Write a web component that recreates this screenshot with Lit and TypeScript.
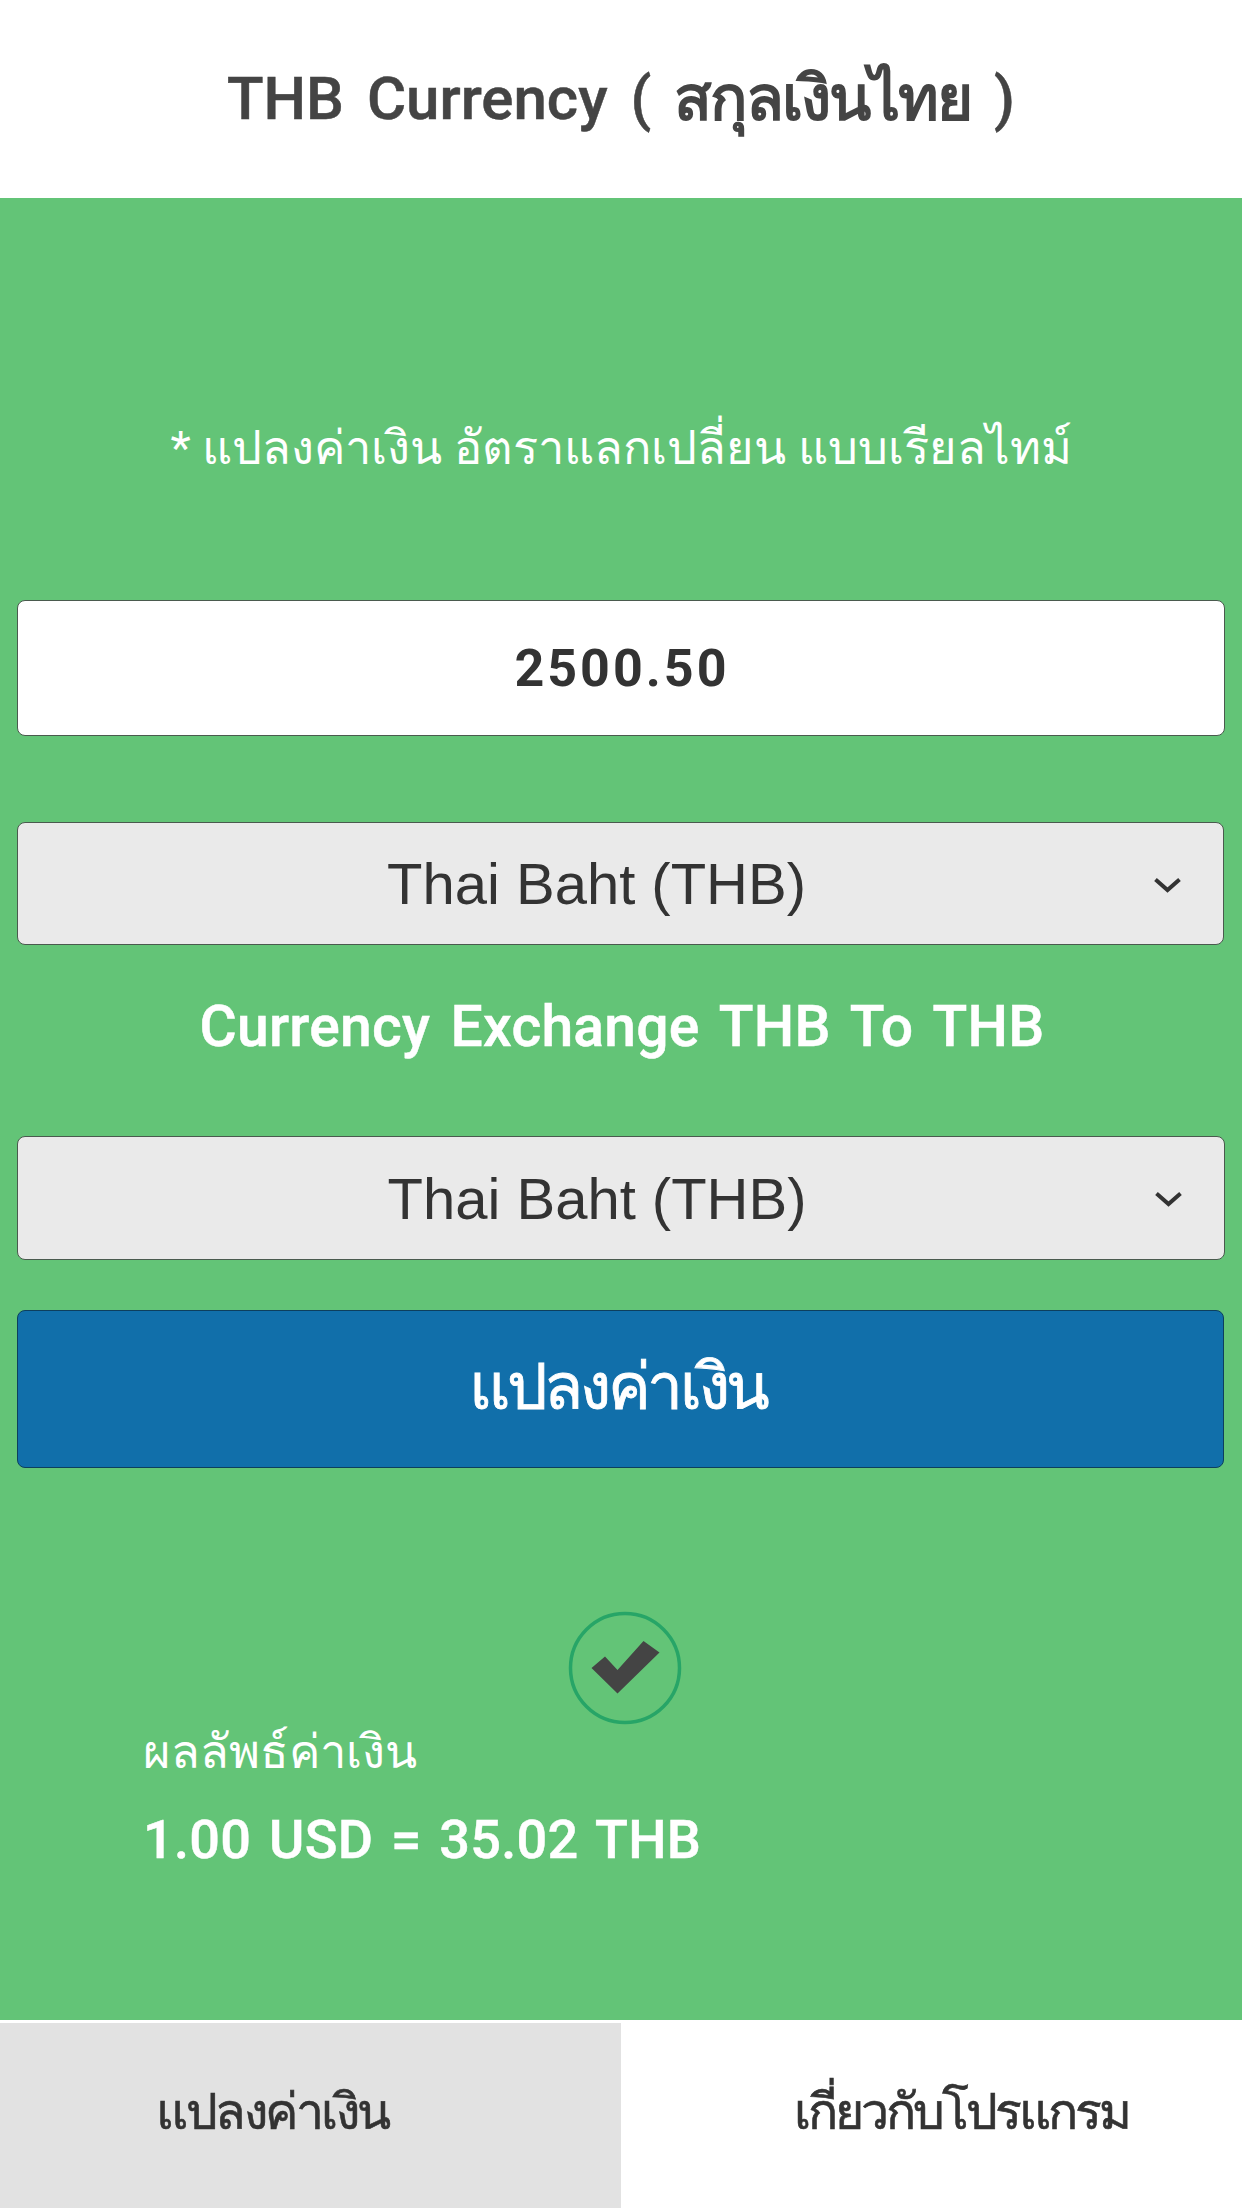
import { LitElement, html, css } from "lit";
import { customElement } from "lit/decorators.js";

const chevron = html`<svg class="chev" width="30" height="20" viewBox="0 0 30 20" aria-hidden="true"><path d="M2.5 4.5 L14.5 15 L26.5 4.5" fill="none" stroke="#333" stroke-width="4"/></svg>`;

@customElement("app-root")
export class AppRoot extends LitElement {
  static styles = css`
    :host { display: block; width: 1242px; height: 2208px; font-family: "Roboto", "Noto Sans", "Noto Sans CJK SC", sans-serif; overflow: hidden; background: #fff; }
    * { box-sizing: border-box; }
    .page { display: flex; flex-direction: column; height: 2208px; }
    .head { height: 198px; display: flex; align-items: center; justify-content: center; background: #fff; color: #444; font-size: 60px; font-weight: 500; letter-spacing: 0; word-spacing: 8px; white-space: pre; -webkit-text-stroke: 0.5px #444; padding-bottom: 2px; }
    .head .th { font-size: 62px; font-weight: 600; letter-spacing: -2px; -webkit-text-stroke: 0; }
    .main { height: 1822px; background: #63c477; padding: 0 17px; display: flex; flex-direction: column; }
    .note { margin-top: 214px; height: 70px; display: flex; align-items: center; justify-content: center; color: #fff; font-size: 47px; white-space: nowrap; }
    .input { margin-top: 118px; height: 136px; background: #fff; border: 1.5px solid #4a5a4e; border-radius: 8px; display: flex; align-items: center; justify-content: center; color: #333; font-size: 52px; font-weight: 700; letter-spacing: 3px; padding-left: 2px; }
    .select { height: 124px; background: #eaeaea; border: 1.5px solid #4a5a4e; border-radius: 8px; position: relative; display: flex; align-items: center; justify-content: center; color: #333; font-family: "Liberation Sans", Arial, sans-serif; font-size: 58px; padding-right: 48px; }
    .first { margin-top: 86px; margin-right: 1px; height: 123px; }
    .chev { position: absolute; right: 40px; top: 50%; margin-top: -9px; }
    .title { height: 191px; display: flex; align-items: center; justify-content: center; color: #fff; font-size: 57px; font-weight: 500; letter-spacing: 0.25px; word-spacing: 6px; padding-left: 2px; padding-bottom: 28px; -webkit-text-stroke: 0.5px #fff; }
    .btn { margin-top: 50px; margin-right: 1px; height: 158px; background: #116faa; border: 1.5px solid #0d3f5e; border-radius: 8px; display: flex; align-items: center; justify-content: center; color: #fff; font-size: 64px; font-weight: 500; letter-spacing: -3.3px; padding-bottom: 6px; padding-right: 5px; -webkit-text-stroke: 0.8px #fff; }
    .check { margin-top: 142.5px; margin-left: 550.5px; width: 114px; height: 114px; display: block; flex: none; }
    .result { padding-left: 126px; margin-top: -8px; color: #fff; }
    .r1 { font-size: 47px; height: 70px; display: flex; align-items: center; }
    .r2 { margin-top: 7px; font-size: 54px; font-weight: 500; letter-spacing: 0.3px; word-spacing: 4px; height: 92px; display: flex; align-items: center; -webkit-text-stroke: 0.5px #fff; }
    .tabs { flex: 1; display: grid; grid-template-columns: 621px 621px; border-top: 3px solid #fff; }
    .tab { display: flex; align-items: center; justify-content: center; color: #333; font-size: 50px; font-weight: 500; padding-bottom: 8px; -webkit-text-stroke: 0.6px #333; }
    .t1 { background: #e2e2e2; padding-right: 76px; letter-spacing: -2.5px; }
    .t2 { background: #fff; padding-left: 60px; letter-spacing: -3px; }
  `;

  render() {
    return html`<div class="page">
      <div class="head">THB Currency ( <span class="th">สกุลเงินไทย</span> )</div>
      <div class="main">
        <div class="note">* แปลงค่าเงิน อัตราแลกเปลี่ยน แบบเรียลไทม์</div>
        <div class="input">2500.50</div>
        <div class="select first">Thai Baht (THB)${chevron}</div>
        <div class="title">Currency Exchange THB To THB</div>
        <div class="select">Thai Baht (THB)${chevron}</div>
        <div class="btn">แปลงค่าเงิน</div>
        <svg class="check" viewBox="0 0 114 114" aria-hidden="true">
          <ellipse cx="57" cy="57" rx="54.5" ry="54.5" fill="none" stroke="#27a567" stroke-width="3.5"/>
          <path d="M23.5 57 L37 45.5 L49.5 59 L75.5 30 L91.5 41.5 L49.5 82.5 Z" fill="#444"/>
        </svg>
        <div class="result">
          <div class="r1">ผลลัพธ์ค่าเงิน</div>
          <div class="r2">1.00 USD = 35.02 THB</div>
        </div>
      </div>
      <div class="tabs">
        <div class="tab t1">แปลงค่าเงิน</div>
        <div class="tab t2">เกี่ยวกับโปรแกรม</div>
      </div>
    </div>`;
  }
}
